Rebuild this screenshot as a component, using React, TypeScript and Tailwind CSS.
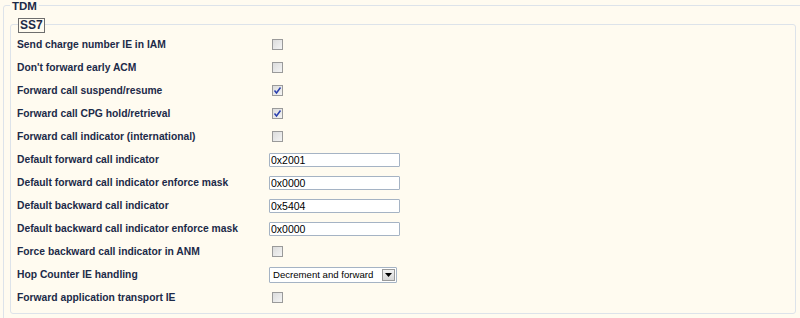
import React from "react";

type Row =
  | { label: string; kind: "check"; checked?: boolean }
  | { label: string; kind: "text"; value: string }
  | { label: string; kind: "select"; value: string };

const rows: Row[] = [
  { label: "Send charge number IE in IAM", kind: "check" },
  { label: "Don't forward early ACM", kind: "check" },
  { label: "Forward call suspend/resume", kind: "check", checked: true },
  { label: "Forward call CPG hold/retrieval", kind: "check", checked: true },
  { label: "Forward call indicator (international)", kind: "check" },
  { label: "Default forward call indicator", kind: "text", value: "0x2001" },
  { label: "Default forward call indicator enforce mask", kind: "text", value: "0x0000" },
  { label: "Default backward call indicator", kind: "text", value: "0x5404" },
  { label: "Default backward call indicator enforce mask", kind: "text", value: "0x0000" },
  { label: "Force backward call indicator in ANM", kind: "check" },
  { label: "Hop Counter IE handling", kind: "select", value: "Decrement and forward" },
  { label: "Forward application transport IE", kind: "check" },
];

function Check({ checked }: { checked?: boolean }) {
  return (
    <div className="ml-[3px] w-[11px] h-[11px] border border-[#9a9a9a] bg-gradient-to-br from-[#dcdcdc] to-[#f4f4f4] flex items-center justify-center">
      {checked && (
        <svg width="9" height="9" viewBox="0 0 9 9">
          <path d="M1.5 4.5 L3.5 7 L7.5 1.5" fill="none" stroke="#2a3fae" strokeWidth="1.5" />
        </svg>
      )}
    </div>
  );
}

export default function App() {
  return (
    <div
      className="w-[800px] h-[318px] bg-[#fffbf0] overflow-hidden relative"
      style={{ fontFamily: '"Liberation Sans", Arial, sans-serif' }}
    >
      <div className="absolute left-[3px] top-[5px] w-[805px] h-[320px] border border-[#dde3ea] rounded-[3px]" />
      <div className="absolute left-[10px] top-0 px-[2px] bg-[#fffbf0] text-[11.5px] font-bold text-[#1c2a48] leading-[12px]">
        TDM
      </div>
      <div className="ml-[10px] mt-[24px] w-[786px] h-[290px] border border-[#dde3ea] rounded-[3px] relative">
        <div className="absolute left-[7px] top-[-7px] h-[15px] px-[1px] border border-[#6e6e6e] bg-[#fffbf0] text-[12px] font-bold text-[#1c2a48] leading-[13px]">
          SS7
        </div>
        <div className="pt-[8px] flex flex-col">
          {rows.map((r, i) => (
            <div key={i} className="h-[23px] flex items-center">
              <div className="w-[258px] pl-[6px] text-[10.3px] font-bold text-[#1c2a48] whitespace-nowrap">
                {r.label}
              </div>
              {r.kind === "check" && <Check checked={r.checked} />}
              {r.kind === "text" && (
                <div className="w-[131px] h-[14px] border border-[#a5b3c4] bg-white rounded-[1px] text-[10.5px] leading-[12px] pl-[1px] text-black">
                  {r.value}
                </div>
              )}
              {r.kind === "select" && (
                <div className="w-[128px] h-[16px] border border-[#a5b3c4] bg-white rounded-[1px] flex items-center justify-between text-[9.6px] leading-[12px] text-black pl-[3px] pr-[1px] whitespace-nowrap overflow-hidden">
                  <span>{r.value}</span>
                  <div className="w-[13px] h-[12px] border border-[#9a9a9a] bg-gradient-to-b from-[#f2f2f2] to-[#d6d6d6] flex items-center justify-center shrink-0">
                    <svg width="7" height="4" viewBox="0 0 7 4">
                      <path d="M0 0 H7 L3.5 4 Z" fill="#000" />
                    </svg>
                  </div>
                </div>
              )}
            </div>
          ))}
        </div>
      </div>
    </div>
  );
}
